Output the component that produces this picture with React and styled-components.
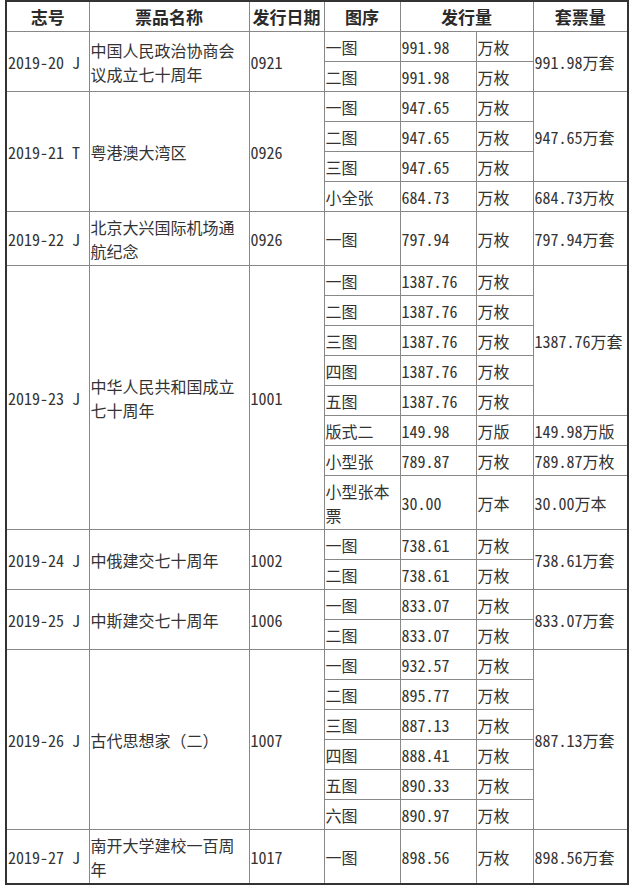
import React from "react";
import styled, { createGlobalStyle } from "styled-components";

const GlobalStyle = createGlobalStyle`
  body {
    margin: 0;
    background: #ffffff;
    font-family: "Noto Sans Mono CJK SC", "Noto Sans CJK SC", sans-serif;
  }
`;

const Page = styled.div`
  padding: 0 0 0 5px;
`;

const Table = styled.table`
  width: 623px;
  border-collapse: collapse;
  table-layout: fixed;
  border: 2px solid #333333;
  color: #333333;
  font-size: 16px;
`;

const HeadCell = styled.th`
  height: 29px;
  padding: 0;
  border: 1px solid #888888;
  font-size: 17px;
  font-weight: bold;
  color: #2a2a2a;
  text-align: center;
  vertical-align: middle;
`;

const Row = styled.tr`
  height: 30px;
`;

const Cell = styled.td`
  padding: 3px 1px 2px;
  border: 1px solid #888888;
  line-height: 24px;
  text-align: left;
  vertical-align: middle;
  word-break: break-all;
`;

const columns = [
  { title: "志号" },
  { title: "票品名称" },
  { title: "发行日期" },
  { title: "图序" },
  { title: "发行量", span: 2 },
  { title: "套票量" },
];

const colWidths = [83, 160, 75, 76, 76, 57, 95];

const issues = [
  {
    code: "2019-20 J",
    name: "中国人民政治协商会议成立七十周年",
    date: "0921",
    items: [
      ["一图", "991.98", "万枚"],
      ["二图", "991.98", "万枚"],
    ],
    totals: { 0: ["991.98万套", 2] },
  },
  {
    code: "2019-21 T",
    name: "粤港澳大湾区",
    date: "0926",
    items: [
      ["一图", "947.65", "万枚"],
      ["二图", "947.65", "万枚"],
      ["三图", "947.65", "万枚"],
      ["小全张", "684.73", "万枚"],
    ],
    totals: { 0: ["947.65万套", 3], 3: ["684.73万枚", 1] },
  },
  {
    code: "2019-22 J",
    name: "北京大兴国际机场通航纪念",
    date: "0926",
    items: [["一图", "797.94", "万枚"]],
    totals: { 0: ["797.94万套", 1] },
  },
  {
    code: "2019-23 J",
    name: "中华人民共和国成立七十周年",
    date: "1001",
    items: [
      ["一图", "1387.76", "万枚"],
      ["二图", "1387.76", "万枚"],
      ["三图", "1387.76", "万枚"],
      ["四图", "1387.76", "万枚"],
      ["五图", "1387.76", "万枚"],
      ["版式二", "149.98", "万版"],
      ["小型张", "789.87", "万枚"],
      ["小型张本票", "30.00", "万本"],
    ],
    totals: {
      0: ["1387.76万套", 5],
      5: ["149.98万版", 1],
      6: ["789.87万枚", 1],
      7: ["30.00万本", 1],
    },
  },
  {
    code: "2019-24 J",
    name: "中俄建交七十周年",
    date: "1002",
    items: [
      ["一图", "738.61", "万枚"],
      ["二图", "738.61", "万枚"],
    ],
    totals: { 0: ["738.61万套", 2] },
  },
  {
    code: "2019-25 J",
    name: "中斯建交七十周年",
    date: "1006",
    items: [
      ["一图", "833.07", "万枚"],
      ["二图", "833.07", "万枚"],
    ],
    totals: { 0: ["833.07万套", 2] },
  },
  {
    code: "2019-26 J",
    name: "古代思想家（二）",
    date: "1007",
    items: [
      ["一图", "932.57", "万枚"],
      ["二图", "895.77", "万枚"],
      ["三图", "887.13", "万枚"],
      ["四图", "888.41", "万枚"],
      ["五图", "890.33", "万枚"],
      ["六图", "890.97", "万枚"],
    ],
    totals: { 0: ["887.13万套", 6] },
  },
  {
    code: "2019-27 J",
    name: "南开大学建校一百周年",
    date: "1017",
    items: [["一图", "898.56", "万枚"]],
    totals: { 0: ["898.56万套", 1] },
  },
];

function IssueRows({ issue }) {
  const span = issue.items.length;
  return issue.items.map((item, i) => {
    const total = issue.totals[i];
    return (
      <Row key={i}>
        {i === 0 && (
          <>
            <Cell rowSpan={span}>{issue.code}</Cell>
            <Cell rowSpan={span}>{issue.name}</Cell>
            <Cell rowSpan={span}>{issue.date}</Cell>
          </>
        )}
        <Cell>{item[0]}</Cell>
        <Cell>{item[1]}</Cell>
        <Cell>{item[2]}</Cell>
        {total && <Cell rowSpan={total[1]}>{total[0]}</Cell>}
      </Row>
    );
  });
}

export default function App() {
  return (
    <Page>
      <GlobalStyle />
      <Table>
        <colgroup>
          {colWidths.map((w, i) => (
            <col key={i} style={{ width: w }} />
          ))}
        </colgroup>
        <thead>
          <tr>
            {columns.map((c) => (
              <HeadCell key={c.title} colSpan={c.span || 1}>
                {c.title}
              </HeadCell>
            ))}
          </tr>
        </thead>
        <tbody>
          {issues.map((issue) => (
            <IssueRows key={issue.code} issue={issue} />
          ))}
        </tbody>
      </Table>
    </Page>
  );
}
